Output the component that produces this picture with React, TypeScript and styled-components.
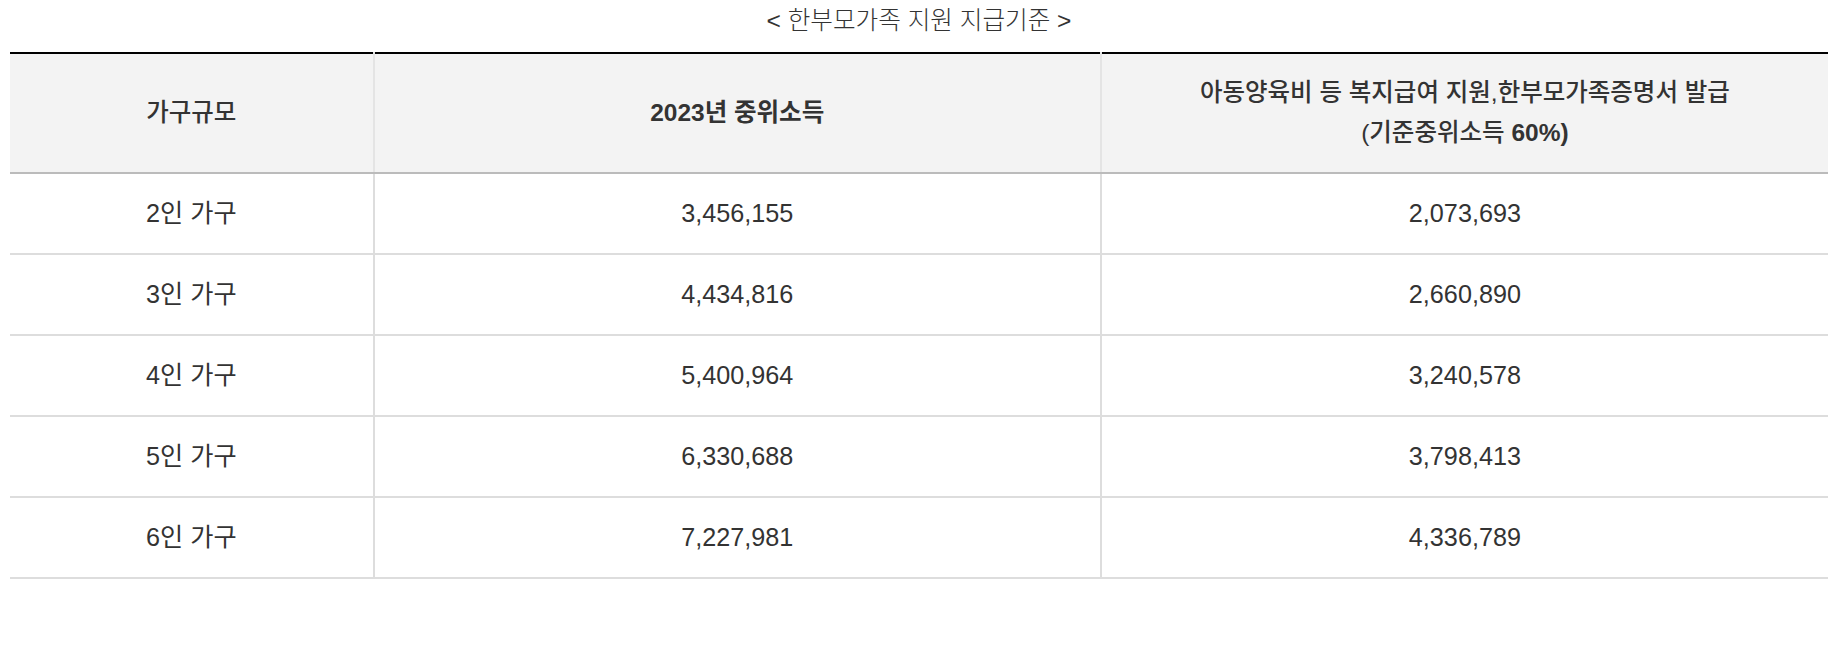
import React from 'react';
import styled, { createGlobalStyle } from 'styled-components';

const GlobalStyle = createGlobalStyle`
	body {
		margin: 0;
		background: #fff;
		font-family: "Liberation Sans", "Noto Sans CJK KR", sans-serif;
		color: #333;
	}
`;

const Wrapper = styled.div`
	padding: 0 16px 0 10px;
`;

const Caption = styled.div`
	text-align: center;
	font-size: 24.6px;
	line-height: 42px;
	font-weight: 300;
	color: #333;
	margin-bottom: 10px;
`;

const Table = styled.table`
	width: 100%;
	border-collapse: collapse;
	table-layout: fixed;
	border-top: 2px solid #000;
`;

const HeadCell = styled.th<{ $first?: boolean }>`
	background: #f3f3f3;
	font-size: 24.5px;
	line-height: 40px;
	font-weight: 700;
	color: #333;
	padding: 19px 10px;
	border-bottom: 2px solid #bbb;
	border-left: ${(p) => (p.$first ? 'none' : '2px solid #e4e4e4')};
	text-align: center;
`;

const Cell = styled.td<{ $first?: boolean }>`
	font-size: 25.2px;
	line-height: 40px;
	color: #333;
	padding: 19px 10px 20px;
	border-bottom: 2px solid #ddd;
	border-left: ${(p) => (p.$first ? 'none' : '2px solid #ddd')};
	text-align: center;
`;

const Light = styled.span`
	font-weight: 500;
`;

type Row = {
	size: string
	median: string
	criteria: string
}

const rows: Row[] = [
	{ size: '2인 가구', median: '3,456,155', criteria: '2,073,693' },
	{ size: '3인 가구', median: '4,434,816', criteria: '2,660,890' },
	{ size: '4인 가구', median: '5,400,964', criteria: '3,240,578' },
	{ size: '5인 가구', median: '6,330,688', criteria: '3,798,413' },
	{ size: '6인 가구', median: '7,227,981', criteria: '4,336,789' },
];

function App() {
	return (
		<Wrapper>
			<GlobalStyle />
			<Caption>&lt; 한부모가족 지원 지급기준 &gt;</Caption>
			<Table>
				<colgroup>
					<col style={{ width: '20%' }} />
					<col style={{ width: '40%' }} />
					<col style={{ width: '40%' }} />
				</colgroup>
				<thead>
					<tr>
						<HeadCell $first><Light>가구규모</Light></HeadCell>
						<HeadCell>2023년 중위소득</HeadCell>
						<HeadCell>
							<Light>아동양육비 등 복지급여 지원,한부모가족증명서 발급</Light>
							<br />
							<Light>(기준중위소득</Light> 60%)
						</HeadCell>
					</tr>
				</thead>
				<tbody>
					{rows.map((r) => (
						<tr key={r.size}>
							<Cell $first>{r.size}</Cell>
							<Cell>{r.median}</Cell>
							<Cell>{r.criteria}</Cell>
						</tr>
					))}
				</tbody>
			</Table>
		</Wrapper>
	);
}

export default App;
